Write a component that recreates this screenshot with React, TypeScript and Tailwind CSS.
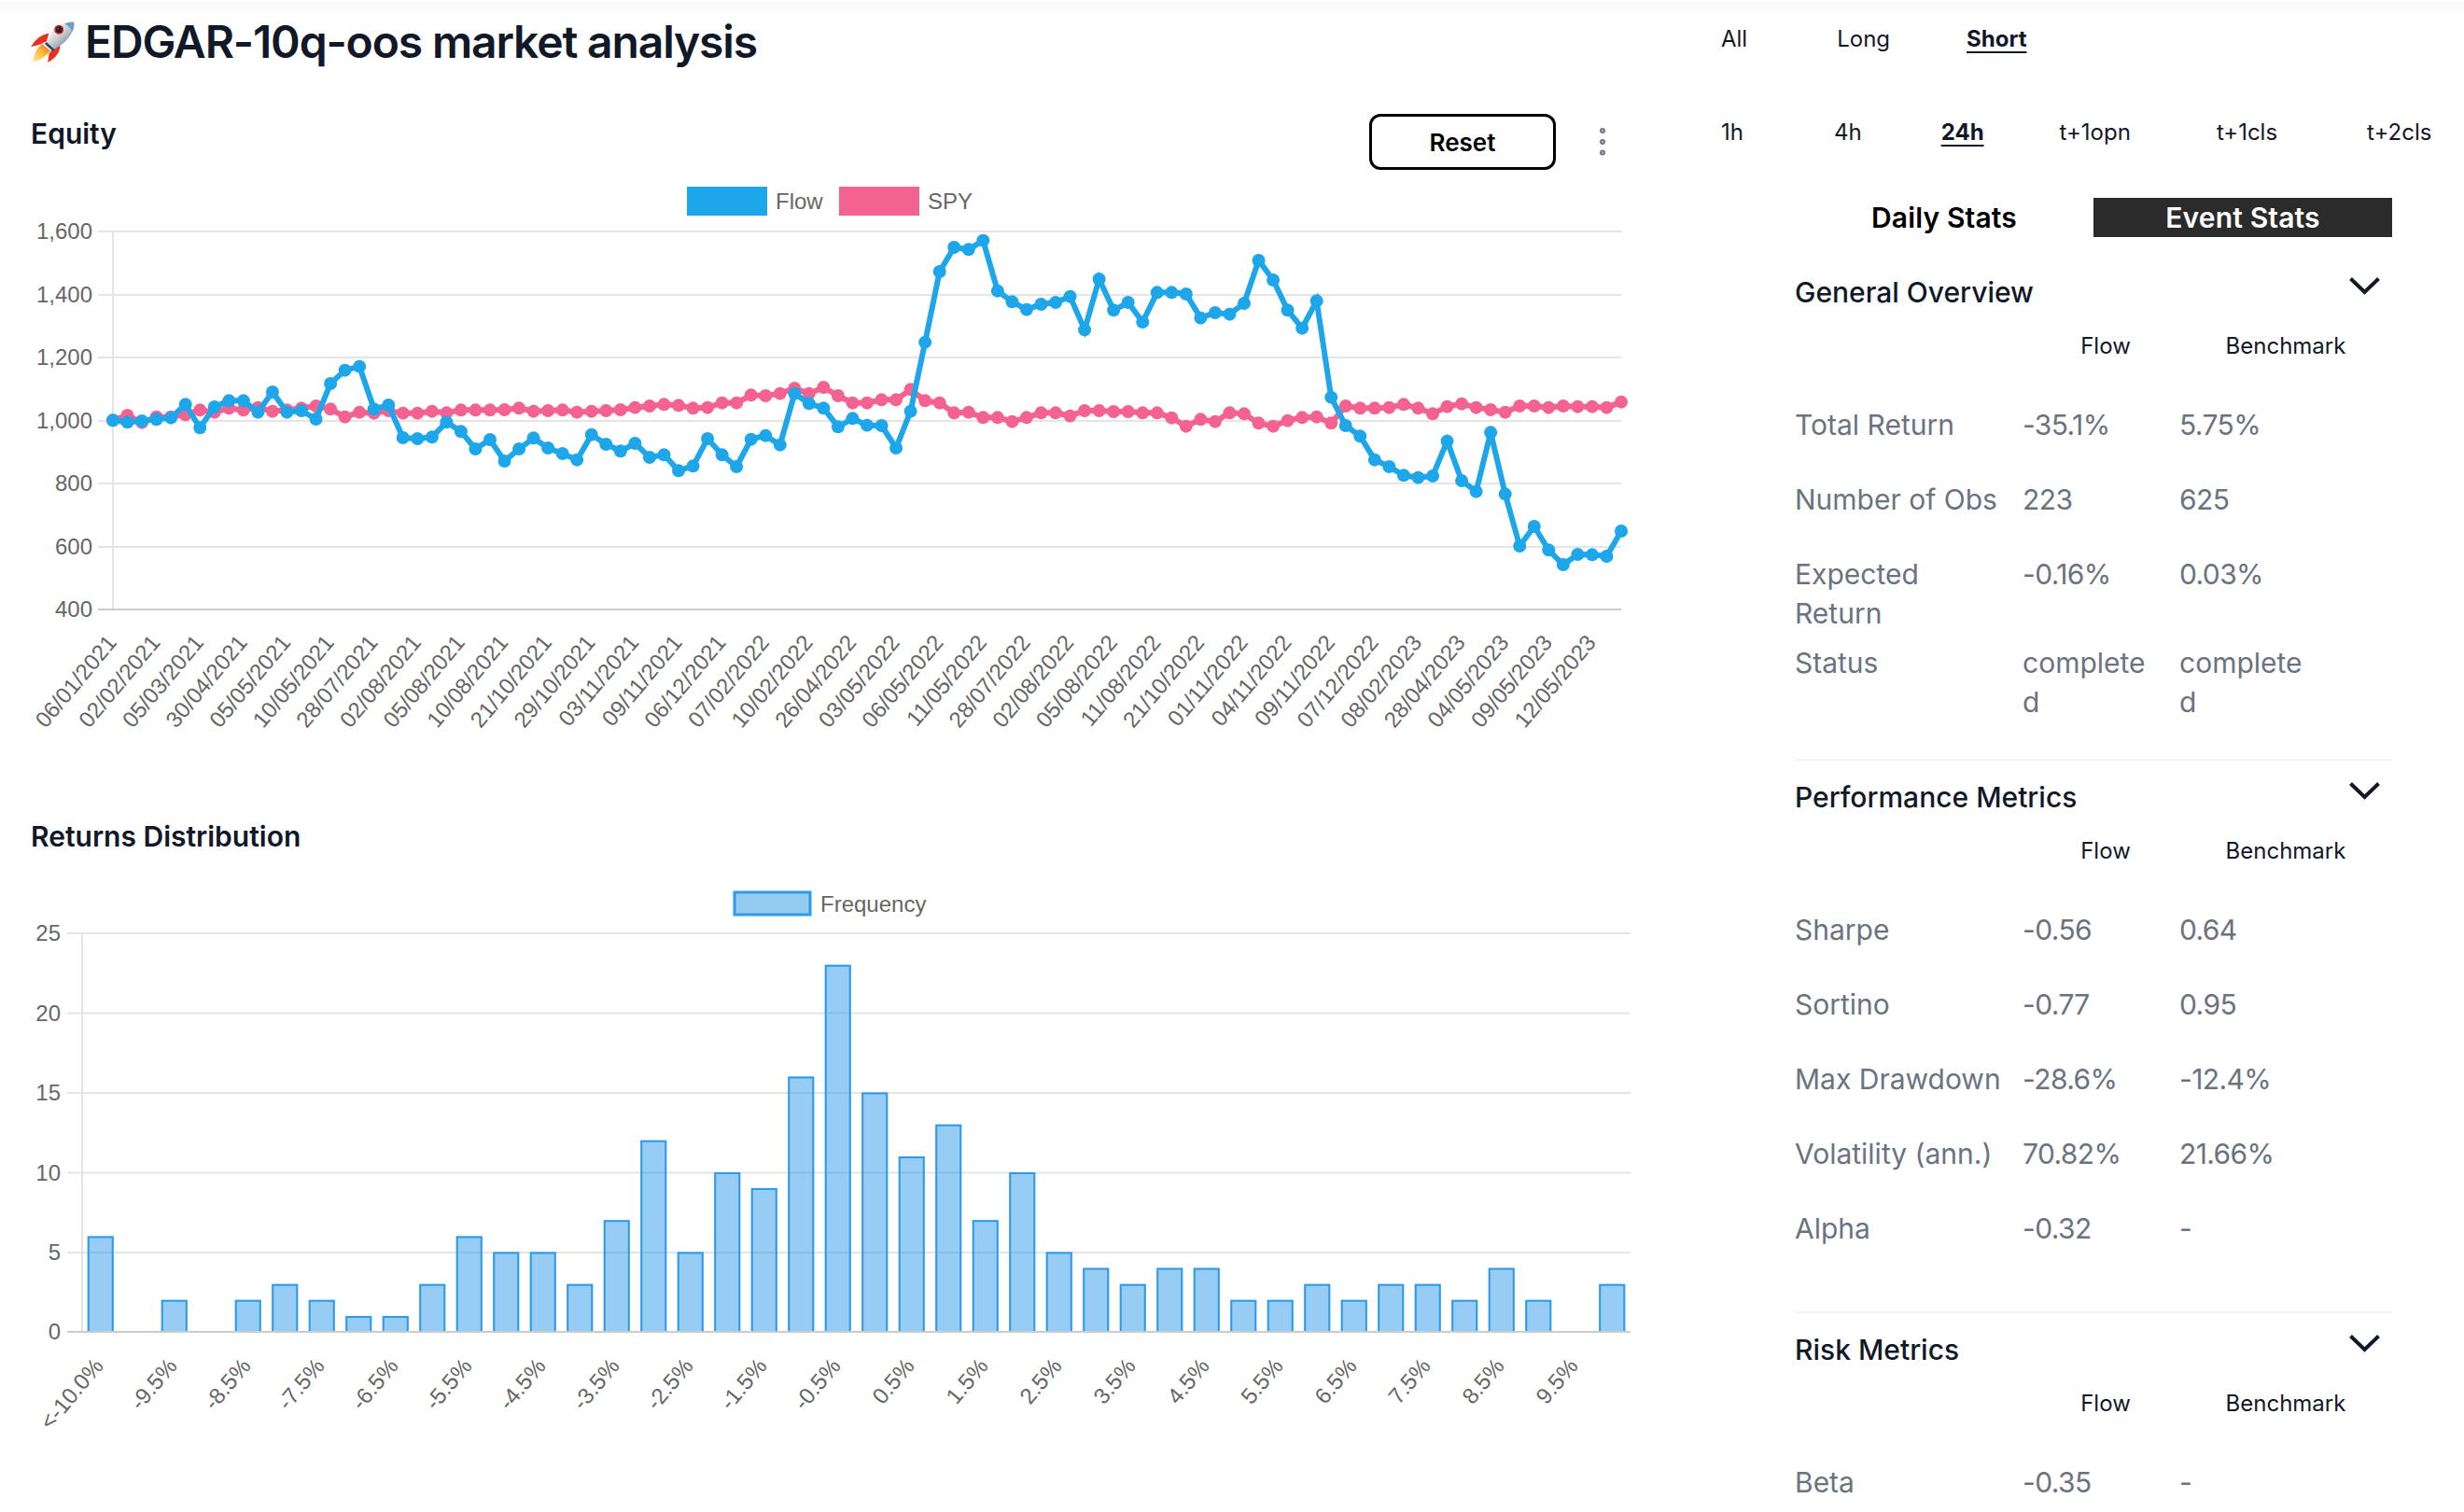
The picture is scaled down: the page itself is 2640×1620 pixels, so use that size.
const chartFont = "font-['Liberation_Sans',Arial,sans-serif] text-[24px] fill-[#666666]"

// plot y positions of each series, read off the chart (first/second half)
const flowY = [
  ...[151, 157, 153, 148, 143, 100, 175, 108, 88, 88, 125, 60, 125, 120, 147, 33, -10, -22, 115, 102, 207, 210, 205, 157, 187, 243, 213, 282, 243, 208, 240, 258, 278, 197, 228, 250, 225, 270, 262, 313, 298, 210, 262, 300, 212, 200, 230, 65, 97, 112, 172].map((v) => 400 + v / 3),
  ...[805, 827, 828, 900, 782, 560, 333, 255, 262, 233, 395, 430, 455, 438, 432, 413, 520, 357, 457, 432, 495, 400, 400, 405, 482, 465, 470, 435, 297, 360, 457, 515, 427, 737, 828, 862, 938, 960, 988, 995, 990, 878, 1005, 1040, 850, 1048, 1215, 1152, 1228, 1275, 1242, 1243, 1248, 1167].map((v) => 180 + v / 3),
]

const spyY = [
  ...[151, 135, 158, 140, 140, 133, 118, 125, 112, 118, 110, 122, 118, 112, 105, 115, 140, 125, 128, 120, 128, 128, 122, 127, 118, 118, 118, 117, 112, 122, 120, 118, 125, 122, 120, 117, 110, 105, 100, 103, 112, 110, 95, 95, 70, 72, 65, 48, 65, 45, 72].map((v) => 400 + v / 3),
  ...[755, 755, 745, 745, 712, 748, 755, 787, 785, 802, 802, 815, 802, 787, 787, 797, 780, 780, 783, 783, 787, 787, 803, 830, 808, 815, 787, 790, 820, 830, 812, 802, 800, 820, 765, 772, 772, 770, 760, 772, 790, 767, 758, 770, 777, 785, 765, 765, 770, 765, 767, 767, 770, 752].map((v) => 180 + v / 3),
]

const equityDates = [
  '06/01/2021', '02/02/2021', '05/03/2021', '30/04/2021', '05/05/2021', '10/05/2021', '28/07/2021',
  '02/08/2021', '05/08/2021', '10/08/2021', '21/10/2021', '29/10/2021', '03/11/2021', '09/11/2021',
  '06/12/2021', '07/02/2022', '10/02/2022', '26/04/2022', '03/05/2022', '06/05/2022', '11/05/2022',
  '28/07/2022', '02/08/2022', '05/08/2022', '11/08/2022', '21/10/2022', '01/11/2022', '04/11/2022',
  '09/11/2022', '07/12/2022', '08/02/2023', '28/04/2023', '04/05/2023', '09/05/2023', '12/05/2023',
]

const equityTicks = [
  { label: '1,600', y: 248 },
  { label: '1,400', y: 316 },
  { label: '1,200', y: 383 },
  { label: '1,000', y: 451 },
  { label: '800', y: 518 },
  { label: '600', y: 586 },
]

const frequencies = [6, 0, 2, 0, 2, 3, 2, 1, 1, 3, 6, 5, 5, 3, 7, 12, 5, 10, 9, 16, 23, 15, 11, 13, 7, 10, 5, 4, 3, 4, 4, 2, 2, 3, 2, 3, 3, 2, 4, 2, 0, 3]

const bucketLabels = [
  '<-10.0%', '-9.5%', '-8.5%', '-7.5%', '-6.5%', '-5.5%', '-4.5%', '-3.5%', '-2.5%', '-1.5%', '-0.5%',
  '0.5%', '1.5%', '2.5%', '3.5%', '4.5%', '5.5%', '6.5%', '7.5%', '8.5%', '9.5%',
]

function Series({ points, color }: { points: number[]; color: string }) {
  const x = (i: number) => 121 + (1616 / 104) * i
  return (
    <g>
      <polyline
        points={points.map((y, i) => `${x(i)},${y}`).join(' ')}
        fill="none"
        stroke={color}
        strokeWidth={6}
      />
      {points.map((y, i) => (
        <circle key={i} cx={x(i)} cy={y} r={7} fill={color} />
      ))}
    </g>
  )
}

function EquityChart() {
  return (
    <svg viewBox="0 190 1780 620" className="block h-[620px] w-[1780px]">
      <rect x={736} y={200} width={86} height={31} fill="#1ea6ea" />
      <text x={831} y={224} className={chartFont}>Flow</text>
      <rect x={899} y={200} width={86} height={31} fill="#f46292" />
      <text x={994} y={224} className={chartFont}>SPY</text>

      {equityTicks.map((tick) => (
        <g key={tick.label}>
          <line x1={105} x2={1737} y1={tick.y} y2={tick.y} stroke="#e5e5e5" strokeWidth={2} />
          <text x={99} y={tick.y + 8} textAnchor="end" className={chartFont}>{tick.label}</text>
        </g>
      ))}
      <line x1={121} x2={121} y1={247} y2={653} stroke="#e5e5e5" strokeWidth={2} />
      <line x1={105} x2={1737} y1={653} y2={653} stroke="#cccccc" strokeWidth={2} />
      <text x={99} y={661} textAnchor="end" className={chartFont}>400</text>

      {equityDates.map((date, i) => (
        <text
          key={date}
          transform={`translate(${121 + (1616 / 104) * 3 * i - 1} 684) rotate(-50)`}
          textAnchor="end"
          y={8}
          className={chartFont}
        >
          {date}
        </text>
      ))}

      <Series points={spyY} color="#f46292" />
      <Series points={flowY} color="#1ea6ea" />
    </svg>
  )
}

function ReturnsChart() {
  const step = (1747 - 88) / 42
  const ticks = [
    { label: '25', y: 1000 },
    { label: '20', y: 1085.5 },
    { label: '15', y: 1171 },
    { label: '10', y: 1256.5 },
    { label: '5', y: 1342 },
  ]
  return (
    <svg viewBox="0 940 1780 620" className="block h-[620px] w-[1780px]">
      <rect x={787} y={956} width={81} height={24} fill="#94cbf0" stroke="#2e9be8" strokeWidth={3} />
      <text x={879} y={977} className={chartFont}>Frequency</text>

      {ticks.map((tick) => (
        <g key={tick.label}>
          <line x1={72} x2={1747} y1={tick.y} y2={tick.y} stroke="#e5e5e5" strokeWidth={2} />
          <text x={65} y={tick.y + 8} textAnchor="end" className={chartFont}>{tick.label}</text>
        </g>
      ))}
      <line x1={88} x2={88} y1={999} y2={1427} stroke="#e5e5e5" strokeWidth={2} />

      {frequencies.map((count, i) => {
        if (count === 0) return null
        const left = 88 + step * i + 5.75
        const top = 1427 - count * 17.1
        return (
          <g key={i}>
            <rect x={left} y={top} width={28} height={count * 17.1} fill="rgba(38,148,232,0.48)" />
            <path
              d={`M${left + 1} 1427 V${top + 1} H${left + 27} V1427`}
              fill="none"
              stroke="#2e9be8"
              strokeWidth={2}
            />
          </g>
        )
      })}

      <line x1={72} x2={1747} y1={1427} y2={1427} stroke="#cccccc" strokeWidth={2} />
      <text x={65} y={1435} textAnchor="end" className={chartFont}>0</text>

      {bucketLabels.map((label, i) => (
        <text
          key={label}
          transform={`translate(${88 + step * (i * 2 + 0.5) - 2} 1459) rotate(-50)`}
          textAnchor="end"
          y={8}
          className={chartFont}
        >
          {label}
        </text>
      ))}
    </svg>
  )
}

function Rocket() {
  return (
    <svg viewBox="0 0 140 132" className="h-[44px] w-[47px] shrink-0">
      <defs>
        <linearGradient id="hull" x1="0.9" y1="0.85" x2="0.25" y2="0.15">
          <stop offset="0" stopColor="#4f7fb8" />
          <stop offset="0.45" stopColor="#b9c0c4" />
          <stop offset="0.8" stopColor="#e8e8e4" />
          <stop offset="1" stopColor="#8fa9c2" />
        </linearGradient>
        <linearGradient id="flame" x1="0" y1="1" x2="1" y2="0">
          <stop offset="0" stopColor="#ffe9a0" />
          <stop offset="0.55" stopColor="#fdb52e" />
          <stop offset="1" stopColor="#e8641c" />
        </linearGradient>
      </defs>
      <path d="M58 38 C36 40 12 58 0 82 L28 74 L50 64Z" fill="#e8301c" />
      <path d="M94 76 C94 98 80 118 54 132 L58 104 L70 88Z" fill="#e8301c" />
      <path d="M36 72 C20 84 8 106 6 130 C28 126 50 112 62 94Z" fill="url(#flame)" />
      <path d="M138 2 C116 0 88 12 68 36 L50 66 L76 90 L104 70 C126 50 142 26 138 2Z" fill="url(#hull)" />
      <path d="M138 2 C128 1 118 3 108 8 C120 12 128 22 132 34 C137 24 140 12 138 2Z" fill="#6f9cc9" />
      <path d="M50 66 L76 90 L70 96 L44 72Z" fill="#2b4a70" />
      <circle cx={90} cy={26} r={15} fill="#d8281e" />
      <circle cx={90} cy={26} r={10} fill="#20242c" />
      <circle cx={87} cy={23} r={3} fill="#5a6472" />
    </svg>
  )
}

function Kebab() {
  return (
    <svg viewBox="0 0 12 36" className="mt-[14px] ml-[44px] mr-[57px] h-[36px] w-[12px] shrink-0">
      {[4, 16, 27.5].map((cy) => (
        <circle key={cy} cx={6} cy={cy} r={2.2} fill="#a3a9b4" stroke="#6b7280" strokeWidth={1.6} />
      ))}
    </svg>
  )
}

function Chevron() {
  return (
    <svg viewBox="0 0 33 19" className="mt-[5px] mr-[13px] h-[19px] w-[33px] shrink-0">
      <polyline points="1.5,1.5 16.5,16 31.5,1.5" fill="none" stroke="#111827" strokeWidth={4} />
    </svg>
  )
}

type StatRow = { label: string; flow: string; benchmark: string; spacing?: string; tracking?: string }

const overviewRows: StatRow[] = [
  { label: 'Total Return', flow: '-35.1%', benchmark: '5.75%' },
  { label: 'Number of Obs', flow: '223', benchmark: '625' },
  { label: 'Expected Return', flow: '-0.16%', benchmark: '0.03%', spacing: 'pt-[19px] pb-[11px]' },
  { label: 'Status', flow: 'completed', benchmark: 'completed', spacing: 'py-0', tracking: 'tracking-normal' },
]

const performanceRows: StatRow[] = [
  { label: 'Sharpe', flow: '-0.56', benchmark: '0.64' },
  { label: 'Sortino', flow: '-0.77', benchmark: '0.95' },
  { label: 'Max Drawdown', flow: '-28.6%', benchmark: '-12.4%' },
  { label: 'Volatility (ann.)', flow: '70.82%', benchmark: '21.66%' },
  { label: 'Alpha', flow: '-0.32', benchmark: '-' },
]

const riskRows: StatRow[] = [{ label: 'Beta', flow: '-0.35', benchmark: '-' }]

function StatsSection({ title, rows, footer }: { title: string; rows: StatRow[]; footer: string }) {
  return (
    <section className={footer}>
      <div className="flex items-start justify-between">
        <h3 className="text-[30px] leading-[42px] font-medium text-[#111827]">{title}</h3>
        <Chevron />
      </div>
      <div className="mt-[21px] flex pl-[229px] text-[24px] leading-[32px] text-[#111827]">
        <span className="w-[208px] text-center">Flow</span>
        <span className="w-[178px] text-center">Benchmark</span>
      </div>
      <div className="mt-[28px]">
        {rows.map((row) => (
          <div
            key={row.label}
            className={`grid grid-cols-[244px_168px_168px] text-[30px] leading-[42px] text-[#6b7280] ${row.spacing ?? 'py-[19px]'}`}
          >
            <span className="pr-[19px]">{row.label}</span>
            <span className={`pr-[24px] break-all ${row.tracking ?? 'tracking-[-0.02em]'}`}>{row.flow}</span>
            <span className={`pr-[24px] break-all ${row.tracking ?? 'tracking-[-0.02em]'}`}>{row.benchmark}</span>
          </div>
        ))}
      </div>
    </section>
  )
}

export default function App() {
  return (
    <div className="flex h-[1620px] w-[2640px] overflow-hidden bg-[linear-gradient(#fff_2px,#f9f9f9_2px,#fff_18px)] font-['Inter',sans-serif]">
      <main className="w-[1780px] shrink-0">
        <div className="flex h-[90px] items-center pl-[33px]">
          <Rocket />
          <h1 className="ml-[11px] text-[48px] leading-[60px] font-semibold tracking-[-0.024em] text-[#111827]">
            EDGAR-10q-oos market analysis
          </h1>
        </div>
        <div className="mt-[32px] flex h-[68px] items-start pl-[33px]">
          <h2 className="mt-[1px] flex-1 text-[30px] leading-[40px] font-semibold text-[#111827]">Equity</h2>
          <button className="h-[60px] w-[200px] rounded-[12px] border-[3px] border-black text-[26px] font-semibold text-black">
            Reset
          </button>
          <Kebab />
        </div>
        <EquityChart />
        <h2 className="h-[130px] pt-[66px] pl-[33px] text-[30px] leading-[40px] font-semibold text-[#111827]">
          Returns Distribution
        </h2>
        <ReturnsChart />
      </main>

      <aside className="flex-1 text-[24px] leading-[36px] text-[#111827]">
        <div className="mt-[24px] flex pl-[64px]">
          <button>All</button>
          <button className="ml-[96px]">Long</button>
          <button className="ml-[82px] font-bold underline underline-offset-[5px]">Short</button>
        </div>
        <div className="mt-[64px] flex pl-[64px]">
          <button>1h</button>
          <button className="ml-[97px]">4h</button>
          <button className="ml-[85px] font-bold underline underline-offset-[5px]">24h</button>
          <button className="ml-[81px]">t+1opn</button>
          <button className="ml-[92px]">t+1cls</button>
          <button className="ml-[96px]">t+2cls</button>
        </div>
        <div className="mt-[52px] ml-[143px] w-[640px]">
          <div className="grid grid-cols-2 text-[30px] font-semibold tracking-[0.005em]">
            <button className="h-[42px] leading-[42px] text-black">Daily Stats</button>
            <button className="h-[42px] bg-[#2b2b2b] leading-[42px] text-white">Event Stats</button>
          </div>
          <div className="mt-[38px]">
            <StatsSection title="General Overview" rows={overviewRows} footer="border-b-2 border-[#f3f4f6] pb-[40px]" />
          </div>
          <div className="mt-[18px]">
            <StatsSection title="Performance Metrics" rows={performanceRows} footer="border-b-2 border-[#f3f4f6] pb-[49px]" />
          </div>
          <div className="mt-[18px]">
            <StatsSection title="Risk Metrics" rows={riskRows} footer="" />
          </div>
        </div>
      </aside>
    </div>
  )
}
